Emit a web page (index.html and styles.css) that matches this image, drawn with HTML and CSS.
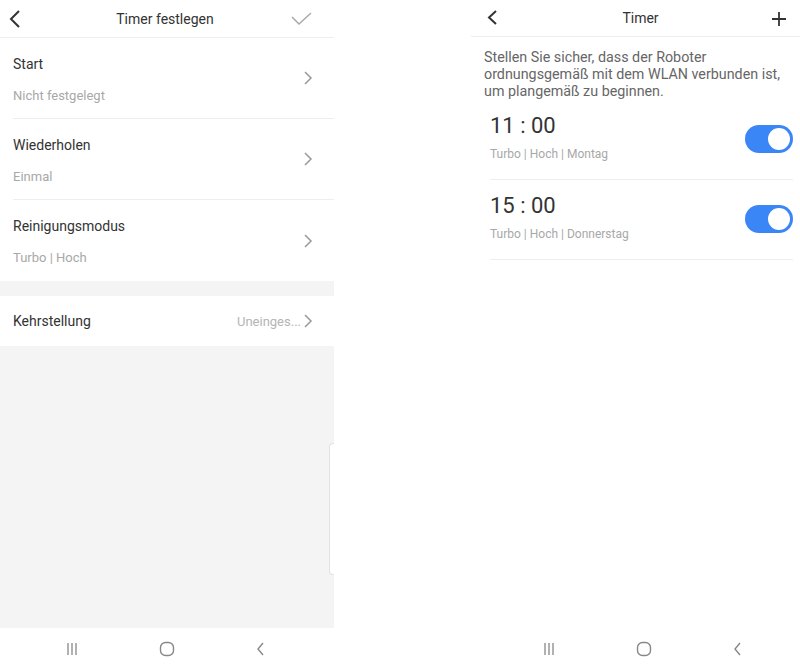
FILE: index.html
```html
<!DOCTYPE html>
<html lang="de">
<head>
    <meta charset="UTF-8">
    <meta name="viewport" content="width=device-width, initial-scale=1.0">
    <title>Timer</title>
    <link rel="stylesheet" href="styles.css">
</head>
<body>
    <div class="screen screen-left">
        <div class="header">
            <span class="icon-btn">
                <svg width="16" height="20" viewBox="0 0 16 20"><polyline points="11,2 3,10 11,18" fill="none" stroke="#333" stroke-width="2"/></svg>
            </span>
            <span class="header-title title-left">Timer festlegen</span>
            <span class="icon-btn icon-check">
                <svg width="24" height="16" viewBox="0 0 24 16"><polyline points="2,5 9,12 21,1" fill="none" stroke="#aaa" stroke-width="1.5"/></svg>
            </span>
        </div>
        <div class="content">
            <div class="group">
                <div class="row">
                    <div class="row-text">
                        <div class="row-title">Start</div>
                        <div class="row-sub">Nicht festgelegt</div>
                    </div>
                    <svg class="chevron" width="10" height="16" viewBox="0 0 10 16"><polyline points="2,2 8,8 2,14" fill="none" stroke="#999" stroke-width="1.5"/></svg>
                </div>
                <div class="row">
                    <div class="row-text">
                        <div class="row-title">Wiederholen</div>
                        <div class="row-sub">Einmal</div>
                    </div>
                    <svg class="chevron" width="10" height="16" viewBox="0 0 10 16"><polyline points="2,2 8,8 2,14" fill="none" stroke="#999" stroke-width="1.5"/></svg>
                </div>
                <div class="row">
                    <div class="row-text">
                        <div class="row-title">Reinigungsmodus</div>
                        <div class="row-sub">Turbo | Hoch</div>
                    </div>
                    <svg class="chevron" width="10" height="16" viewBox="0 0 10 16"><polyline points="2,2 8,8 2,14" fill="none" stroke="#999" stroke-width="1.5"/></svg>
                </div>
            </div>
            <div class="group">
                <div class="row row-single">
                    <div class="row-title">Kehrstellung</div>
                    <div class="row-value">Uneinges...</div>
                    <svg class="chevron" width="10" height="16" viewBox="0 0 10 16"><polyline points="2,2 8,8 2,14" fill="none" stroke="#999" stroke-width="1.5"/></svg>
                </div>
            </div>
            <div class="edge-handle"></div>
        </div>
        <div class="navbar navbar-left">
            <svg width="14" height="14" viewBox="0 0 14 14"><path d="M3 1v12M7 1v12M11 1v12" stroke="#888" stroke-width="1.3"/></svg>
            <svg width="16" height="16" viewBox="0 0 16 16"><rect x="1.5" y="1.5" width="13" height="13" rx="5" fill="none" stroke="#888" stroke-width="1.4"/></svg>
            <svg width="12" height="16" viewBox="0 0 12 16"><polyline points="8,2 3,8 8,14" fill="none" stroke="#888" stroke-width="1.4"/></svg>
        </div>
    </div>

    <div class="spacer"></div>

    <div class="screen screen-right">
        <div class="header header-right">
            <span class="icon-btn">
                <svg width="16" height="20" viewBox="0 0 16 20"><polyline points="11,3 4,9.5 11,16" fill="none" stroke="#333" stroke-width="2"/></svg>
            </span>
            <span class="header-title title-right">Timer</span>
            <span class="icon-btn icon-plus">
                <svg width="18" height="18" viewBox="0 0 18 18"><path d="M9 2v14M2 9h14" stroke="#333" stroke-width="1.8"/></svg>
            </span>
        </div>
        <div class="content content-right">
            <p class="notice">Stellen Sie sicher, dass der Roboter ordnungsgemäß mit dem WLAN verbunden ist, um plangemäß zu beginnen.</p>
            <div class="timer-item">
                <div class="timer-text">
                    <div class="timer-time">11 : 00</div>
                    <div class="timer-sub">Turbo | Hoch | Montag</div>
                </div>
                <div class="toggle"><span class="knob"></span></div>
            </div>
            <div class="timer-item">
                <div class="timer-text">
                    <div class="timer-time">15 : 00</div>
                    <div class="timer-sub">Turbo | Hoch | Donnerstag</div>
                </div>
                <div class="toggle"><span class="knob"></span></div>
            </div>
        </div>
        <div class="navbar navbar-right">
            <svg width="14" height="14" viewBox="0 0 14 14"><path d="M3 1v12M7 1v12M11 1v12" stroke="#888" stroke-width="1.3"/></svg>
            <svg width="16" height="16" viewBox="0 0 16 16"><rect x="1.5" y="1.5" width="13" height="13" rx="5" fill="none" stroke="#888" stroke-width="1.4"/></svg>
            <svg width="12" height="16" viewBox="0 0 12 16"><polyline points="8,2 3,8 8,14" fill="none" stroke="#888" stroke-width="1.4"/></svg>
        </div>
    </div>
</body>
</html>
```

FILE: styles.css
```css
body {
    display: flex;
    height: 671px;
    margin: 0;
    overflow: hidden;
    background-color: #fff;
    font-family: Roboto, "Noto Sans", Arial, sans-serif;
    color: #333;
}
.screen {
    display: flex;
    flex-direction: column;
    height: 100%;
}
.screen-left {
    width: 334px;
    background-color: #f4f4f4;
}
.spacer {
    width: 136px;
}
.screen-right {
    width: 330px;
    background-color: #fff;
}
.header {
    display: flex;
    align-items: center;
    height: 38px;
    padding: 0 20px 0 8px;
    background-color: #fff;
    border-bottom: 1px solid #eee;
    box-sizing: border-box;
}
.icon-btn {
    display: flex;
    align-items: center;
}
.icon-check {
    margin-top: 2px;
}
.header-title {
    flex: 1;
    text-align: center;
    font-size: 14px;
    color: #333;
}
.title-left {
    padding-left: 16px;
}
.header-right {
    height: 37px;
    padding: 0 12px 0 14px;
    margin-left: 1px;
}
.title-right {
    padding-left: 10px;
}
.icon-plus {
    margin-top: 1px;
}
.content {
    position: relative;
    flex: 1;
}
.group {
    background-color: #fff;
}
.group + .group {
    margin-top: 15px;
}
.row {
    display: flex;
    align-items: center;
    height: 81px;
    margin-left: 13px;
    padding-right: 21px;
    border-bottom: 1px solid #eee;
    box-sizing: border-box;
}
.row:last-child {
    border-bottom: none;
}
.row-text {
    flex: 1;
    display: flex;
    flex-direction: column;
    gap: 12px;
    padding-top: 3px;
}
.row-title {
    font-size: 14px;
    line-height: 20px;
    color: #333;
}
.row-sub {
    font-size: 13px;
    line-height: 20px;
    color: #a8a8a8;
}
.row-single {
    height: 50px;
}
.row-single .row-title {
    flex: 1;
}
.row-value {
    font-size: 13px;
    color: #b4b4b4;
    margin-right: 2px;
}
.chevron {
    flex-shrink: 0;
}
.edge-handle {
    position: absolute;
    right: 0;
    top: 405px;
    width: 4px;
    height: 130px;
    background-color: #fff;
    border: 1px solid #e2e2e2;
    border-right: none;
    border-radius: 4px 0 0 4px;
}
.navbar {
    display: flex;
    align-items: center;
    justify-content: center;
    gap: 80px;
    height: 43px;
    background-color: #fff;
    padding-bottom: 2px;
    box-sizing: border-box;
}
.navbar-left {
    padding-right: 3px;
}
.navbar-right {
    padding-left: 16px;
}
.content-right {
    padding: 0 7px 0 14px;
}
.notice {
    margin: 12px 10px 0 0;
    font-size: 14.3px;
    line-height: 17px;
    color: #666;
}
.timer-item {
    display: flex;
    align-items: center;
    margin-left: 6px;
    padding: 12px 0 16px;
    border-bottom: 1px solid #eee;
}
.timer-text {
    flex: 1;
}
.timer-time {
    font-size: 22px;
    line-height: 28px;
    color: #333;
}
.timer-sub {
    margin-top: 5px;
    font-size: 12px;
    line-height: 18px;
    color: #a8a8a8;
}
.toggle {
    display: flex;
    justify-content: flex-end;
    align-items: center;
    width: 48px;
    height: 28px;
    padding: 3px;
    border-radius: 14px;
    background-color: #3b86f6;
    box-sizing: border-box;
    margin-top: 2px;
}
.knob {
    width: 22px;
    height: 22px;
    border-radius: 50%;
    background-color: #fff;
}
```
